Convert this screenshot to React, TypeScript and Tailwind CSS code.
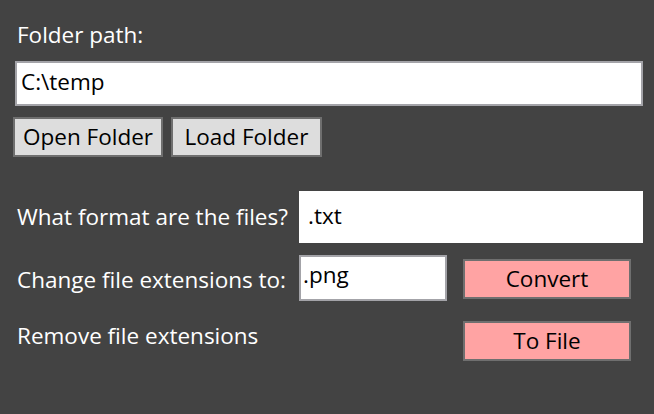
import { useState } from 'react'

const font = { fontFamily: '"Open Sans", "Noto Sans", sans-serif' }

export default function App() {
  const [folder, setFolder] = useState('C:\\temp')
  const [fromExt, setFromExt] = useState('.txt')
  const [toExt, setToExt] = useState('.png')

  return (
    <div className="w-[654px] h-[414px] bg-[#434343] text-white text-[22.5px] overflow-hidden" style={font}>
      <div className="pt-[20px] pl-[17px] leading-[30px]">Folder path:</div>

      <input
        value={folder}
        onChange={(e) => setFolder(e.target.value)}
        className="block ml-[15px] mt-[11px] w-[628px] h-[45px] bg-white border-2 border-[#a3a3a8] px-[4px] pb-[5px] text-[22.5px] text-black outline-none"
      />

      <div className="flex gap-[8px] ml-[13px] mt-[11px]">
        <button className="w-[150px] h-[40px] bg-[#dddddd] border-2 border-[#6f6f6f] text-black text-[22.5px] leading-[34px]">
          Open Folder
        </button>
        <button className="w-[151px] h-[40px] bg-[#dddddd] border-2 border-[#6f6f6f] text-black text-[22.5px] leading-[34px]">
          Load Folder
        </button>
      </div>

      {/* 格式行 */}
      <div className="flex items-center mt-[34px] ml-[17px]">
        <div className="w-[282px] whitespace-nowrap">What format are the files?</div>
        <input
          value={fromExt}
          onChange={(e) => setFromExt(e.target.value)}
          className="w-[344px] h-[52px] bg-white px-[9px] pb-[4px] text-[22.5px] text-black outline-none"
        />
      </div>

      <div className="flex items-start mt-[12px] ml-[17px]">
        <div className="w-[282px] h-[46px] flex items-center pt-[4px] whitespace-nowrap">
          Change file extensions to:
        </div>
        <input
          value={toExt}
          onChange={(e) => setToExt(e.target.value)}
          className="w-[148px] h-[46px] bg-white border-2 border-[#a3a3a8] px-[2px] pb-[8px] text-[22.5px] text-black outline-none"
        />
        <button className="ml-[16px] mt-[4px] w-[168px] h-[40px] bg-[#ffa3a3] border-2 border-[#6f6f6f] text-black text-[22.5px] leading-[34px]">
          Convert
        </button>
      </div>

      <div className="flex items-start mt-[20px] ml-[17px]">
        <div className="w-[446px] h-[30px] leading-[30px]">Remove file extensions</div>
        <button className="w-[168px] h-[40px] bg-[#ffa3a3] border-2 border-[#6f6f6f] text-black text-[22.5px] leading-[34px]">
          To File
        </button>
      </div>
    </div>
  )
}
